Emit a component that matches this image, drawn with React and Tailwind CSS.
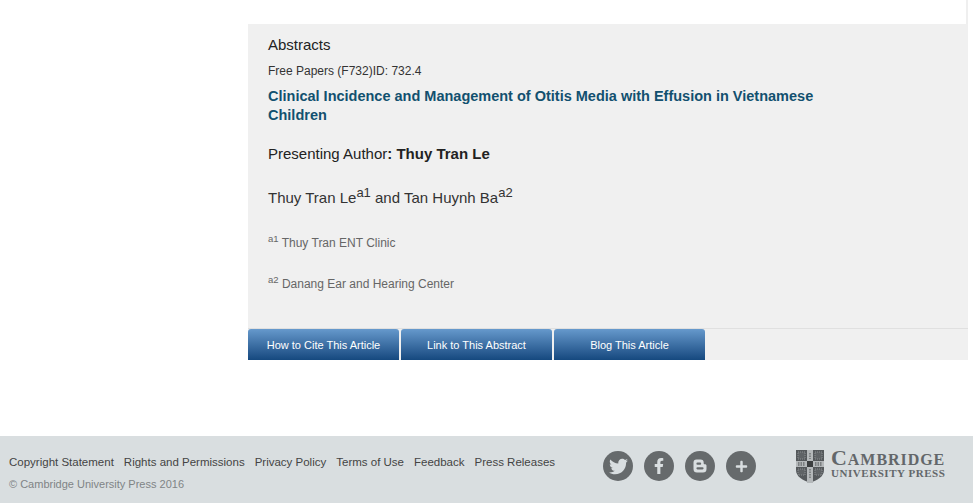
import React from "react";
import { FaTwitter, FaFacebookF, FaPlus } from "react-icons/fa";

const sans = { fontFamily: '"Liberation Sans", Arial, sans-serif' };

function Tab({ label, w }) {
  return (
    <a className={`flex h-[31px] items-center justify-center rounded-t-[3px] bg-gradient-to-b from-[#6699cc] to-[#15497f] pt-[1px] text-[11px] text-white ${w}`}>
      {label}
    </a>
  );
}

function Social({ children }) {
  return (
    <div className="flex h-[30px] w-[30px] items-center justify-center rounded-full bg-[#666a6c] text-[#d9dee0]">
      {children}
    </div>
  );
}

function Blogger() {
  return (
    <svg width="16" height="16" viewBox="0 0 16 16" fill="currentColor">
      <path fillRule="evenodd" d="M4.5 1.5h4A3.2 3.2 0 0 1 11.7 4.7v.6c0 .6.4 1 1 1h.3c.8 0 1.5.6 1.5 1.4v3.3a3.5 3.5 0 0 1-3.5 3.5h-6A3.5 3.5 0 0 1 1.5 11V4.5a3 3 0 0 1 3-3zM5.5 4.6a1.1 1.1 0 0 0 0 2.2h2.6a1.1 1.1 0 0 0 0-2.2zM5.5 9.2a1.1 1.1 0 0 0 0 2.2h5a1.1 1.1 0 0 0 0-2.2z" />
    </svg>
  );
}

function Shield() {
  const cell = "#5f6366";
  return (
    <svg width="28" height="33" viewBox="0 0 28 33">
      <path d="M0 0h28v20c0 7-7 10-14 13C7 30 0 27 0 20z" fill="#55595c" />
      <path d="M11 0h6v33h-6zM0 11h28v6H0z" fill="#b4b8ba" />
      <rect x="11" y="11" width="6" height="6" fill="#3b3e40" />
      <path d="M2 2h7v7H2zM19 2h7v7h-7zM2 19h7v6H2zM19 19h7v6h-7z" fill={cell} stroke="#8b8f91" strokeWidth="1" strokeDasharray="1 1" />
      <path d="M2 13h7M19 13h7M2 15h7M19 15h7M14 3v6M14 19v9" stroke="#6a6e70" strokeWidth="1.4" strokeDasharray="1.5 1" />
    </svg>
  );
}

export default function App() {
  return (
    <div style={sans} className="flex h-[503px] w-[973px] flex-col overflow-hidden bg-white">
      <div className="flex h-[24px] justify-end pr-[5px]">
        <div className="w-[2px] bg-[#efefef]" />
      </div>
      <main className="pl-[248px]">
        <div className="flex h-[336px] w-[720px] flex-col bg-[#f0f0f0]">
          <div className="flex-1 pl-[20px] pt-[12px]">
            <h2 className="text-[15px] leading-[18px] text-[#222]">Abstracts</h2>
            <p className="mt-[10px] text-[12px] leading-[14px] text-[#333]">Free Papers (F732)ID: 732.4</p>
            <h1 className="mt-[9px] w-[560px] text-[14.5px] font-bold leading-[19px] text-[#12506f]">
              Clinical Incidence and Management of Otitis Media with Effusion in Vietnamese Children
            </h1>
            <p className="mt-[20px] text-[15px] leading-[18px] text-[#222]">
              Presenting Author<b>: Thuy Tran Le</b>
            </p>
            <p className="mt-[26px] text-[15px] leading-[18px] text-[#333]">
              Thuy Tran Le<sup className="text-[13px]">a1</sup> and Tan Huynh Ba<sup className="text-[13px]">a2</sup>
            </p>
            <p className="mt-[29px] text-[12px] leading-[14px] text-[#666]">
              <sup className="text-[9.5px]">a1</sup> Thuy Tran ENT Clinic
            </p>
            <p className="mt-[27px] text-[12px] leading-[14px] text-[#666]">
              <sup className="text-[9.5px]">a2</sup> Danang Ear and Hearing Center
            </p>
          </div>
          <nav className="flex h-[32px] gap-[2px] border-t border-[#e0e0e0]">
            <Tab label="How to Cite This Article" w="w-[151px]" />
            <Tab label="Link to This Abstract" w="w-[151px]" />
            <Tab label="Blog This Article" w="w-[151px]" />
          </nav>
        </div>
      </main>
      <footer className="mt-[76px] flex h-[67px] items-start bg-[#d9dee0]">
        <div className="w-[595px] pl-[9px] pt-[19px]">
          <div className="flex gap-[10px] text-[11.5px] leading-[14px] text-[#444]">
            <span>Copyright Statement</span>
            <span>Rights and Permissions</span>
            <span>Privacy Policy</span>
            <span>Terms of Use</span>
            <span>Feedback</span>
            <span>Press Releases</span>
          </div>
          <p className="mt-[8px] text-[11px] leading-[14px] text-[#808486]">© Cambridge University Press 2016</p>
        </div>
        <div className="ml-[8px] mt-[15px] flex gap-[11px]">
          <Social><FaTwitter size={19} /></Social>
          <Social><FaFacebookF size={16} /></Social>
          <Social><Blogger /></Social>
          <Social><FaPlus size={13} /></Social>
        </div>
        <div className="ml-[40px] mt-[14px] flex gap-[7px] text-[#63676a]" style={{ fontFamily: '"Liberation Serif", serif' }}>
          <Shield />
          <div>
            <div className="h-[18px] text-[16px] font-bold leading-[16px] tracking-[0.95px]">
              <span className="text-[22px] leading-[16px]">C</span>AMBRIDGE
            </div>
            <div className="text-[11px] font-bold leading-[11px] tracking-[0.55px]">UNIVERSITY PRESS</div>
          </div>
        </div>
      </footer>
    </div>
  );
}
